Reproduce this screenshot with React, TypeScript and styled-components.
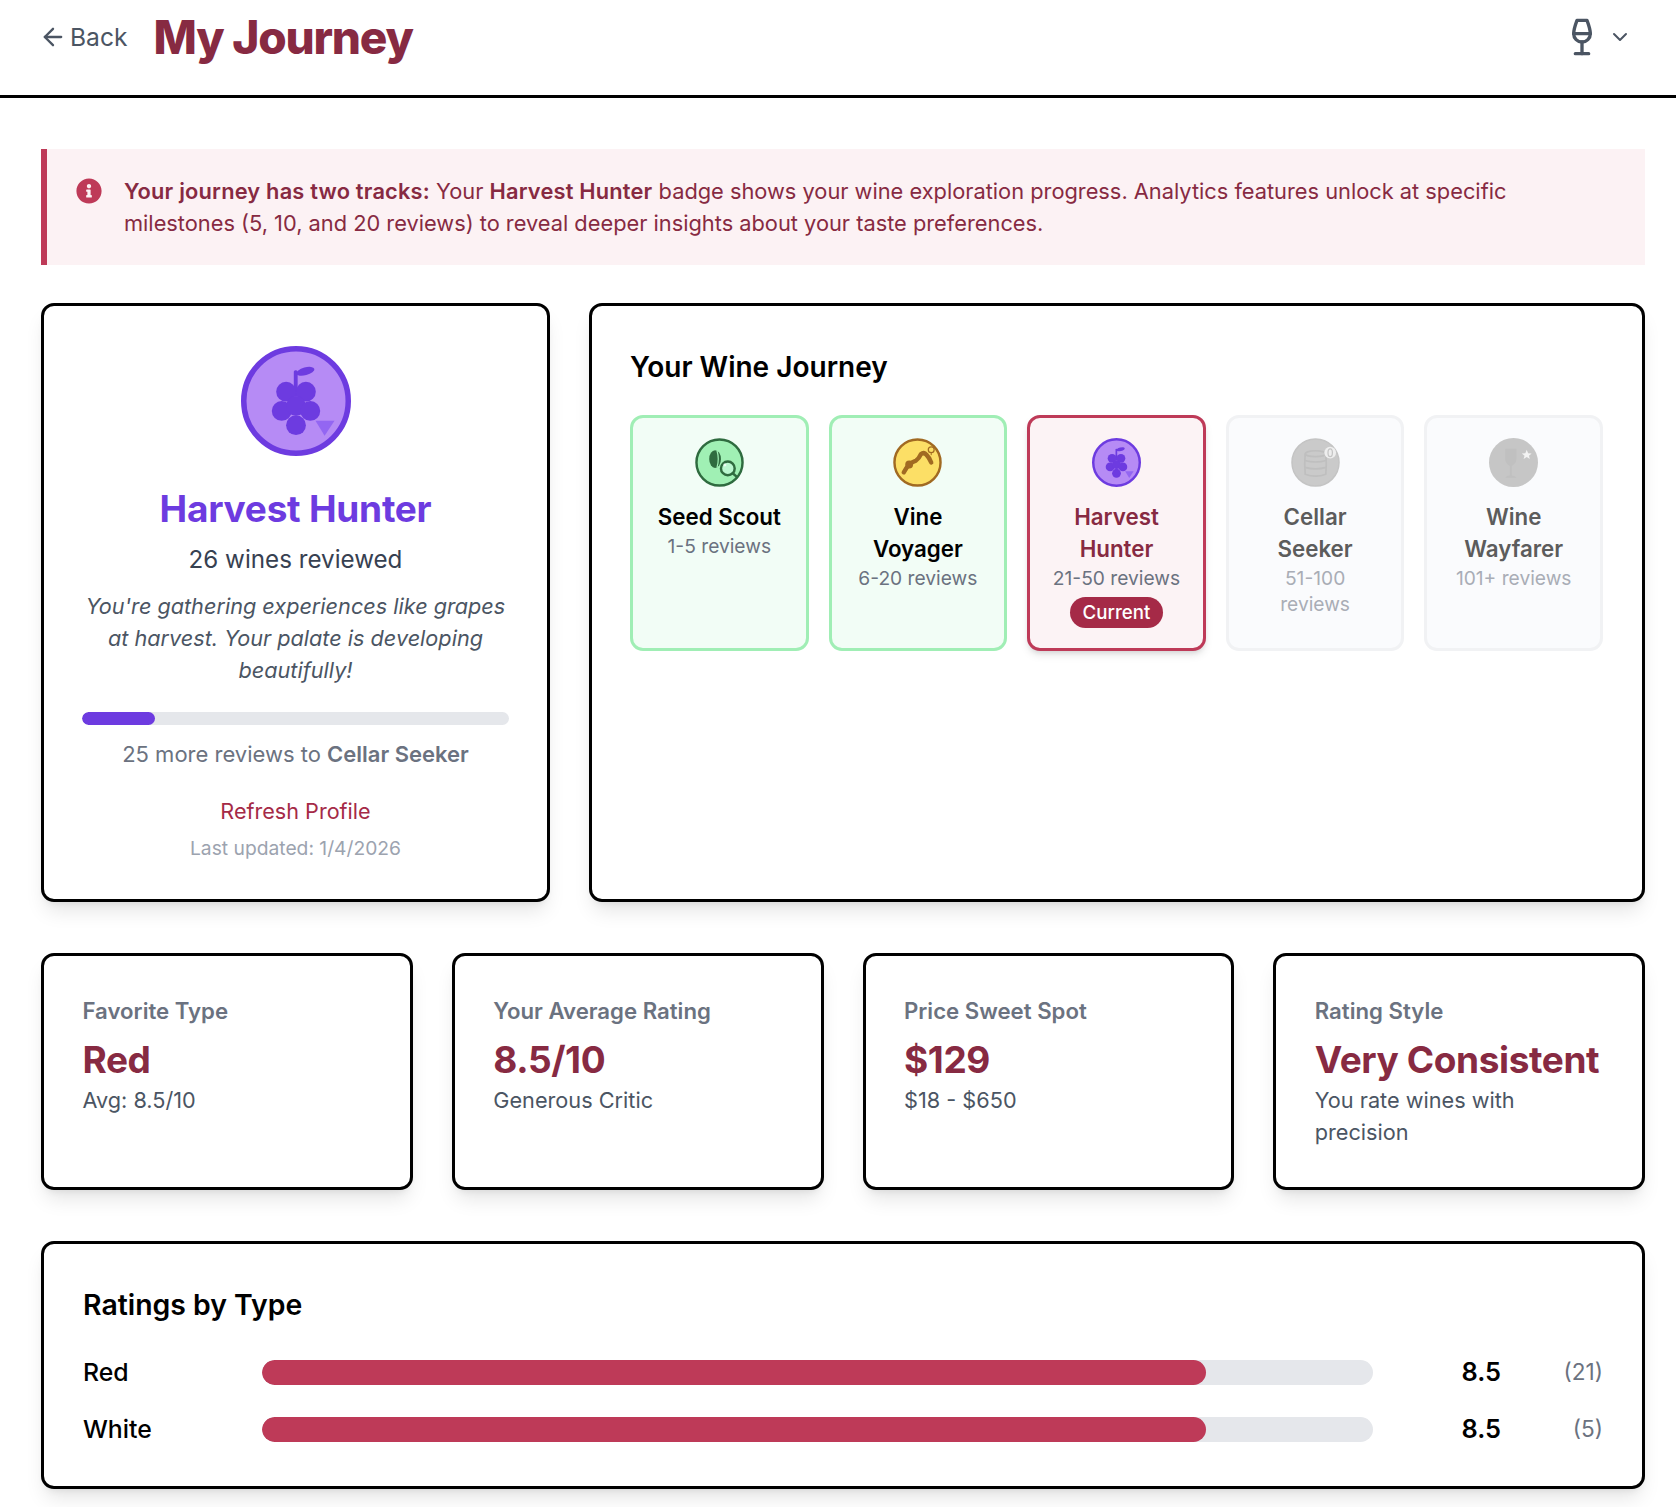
import React from 'react';
import styled, { createGlobalStyle } from 'styled-components';
import { ArrowLeft, ChevronDown, Wine } from 'lucide-react';
import { FaInfoCircle } from 'react-icons/fa';

type TierState = 'done' | 'current' | 'locked';

const GlobalStyle = createGlobalStyle`
  html, body {
    margin: 0;
    padding: 0;
    background: #fff;
    font-family: 'Inter', 'Liberation Sans', sans-serif;
    color: #000;
  }
  * {
    box-sizing: border-box;
  }
`;

const Header = styled.header`
  display: flex;
  align-items: center;
  height: 98px;
  padding: 0 44px 22px 39px;
  border-bottom: 3px solid #000;
`;

const BackLink = styled.a`
  display: flex;
  align-items: center;
  gap: 3px;
  font-size: 24.6px;
  line-height: 30px;
  padding-top: 1px;
  color: #4b5563;
  margin-right: 26px;
`;

const PageTitle = styled.h1`
  flex: 1;
  margin: 1px 0 0;
  font-size: 46px;
  line-height: 58px;
  font-weight: 800;
  letter-spacing: -1.2px;
  color: #872a42;
`;

const UserMenu = styled.div`
  display: flex;
  align-items: center;
  gap: 6px;
  color: #4b5563;
`;

const Main = styled.main`
  padding: 51px 31px 18px 41px;
`;

const Notice = styled.div`
  display: flex;
  gap: 22px;
  padding: 26px 48px 26px 29px;
  background: #fcf2f4;
  border-left: 6px solid #be3a58;
  font-size: 21.8px;
  line-height: 32px;
  color: #872a42;
  svg {
    flex: none;
    margin-top: 3px;
    color: #be3a58;
  }
  strong {
    font-weight: 600;
    letter-spacing: 0.2px;
  }
`;

const TopGrid = styled.div`
  display: grid;
  grid-template-columns: 509px 1fr;
  gap: 39px;
  margin-top: 38px;
`;

const Card = styled.section`
  background: #fff;
  border: 3px solid #000;
  border-radius: 13px;
  box-shadow: 0 13px 20px -4px rgba(0, 0, 0, 0.1), 0 5px 8px -5px rgba(0, 0, 0, 0.1);
`;

const ProfileCard = styled(Card)`
  display: flex;
  flex-direction: column;
  align-items: center;
  padding: 40px 38px 37px;
  text-align: center;
`;

const BigBadge = styled.div`
  width: 110px;
  height: 110px;
  svg {
    display: block;
    width: 100%;
    height: 100%;
  }
`;

const LevelName = styled.div`
  margin-top: 29px;
  font-size: 37px;
  line-height: 48px;
  font-weight: 700;
  letter-spacing: -0.25px;
  color: #6d3be0;
`;

const ReviewCount = styled.div`
  margin-top: 11px;
  font-size: 24.2px;
  line-height: 32px;
  color: #374151;
`;

const Tagline = styled.p`
  margin: 14px 0 0;
  font-size: 21.66px;
  line-height: 32px;
  font-style: italic;
  color: #4b5563;
`;

const ProgressTrack = styled.div`
  width: 100%;
  height: 13px;
  margin-top: 26px;
  border-radius: 7px;
  background: #e5e7eb;
  overflow: hidden;
`;

const ProgressFill = styled.div`
  height: 100%;
  border-radius: 7px;
  background: #6d3be0;
`;

const NextLevel = styled.div`
  margin-top: 13px;
  font-size: 22px;
  line-height: 32px;
  color: #6b7280;
  strong {
    font-weight: 600;
  }
`;

const RefreshLink = styled.a`
  margin-top: 25px;
  font-size: 21.6px;
  line-height: 32px;
  color: #a52a47;
`;

const LastUpdated = styled.div`
  margin-top: 8px;
  font-size: 19.25px;
  line-height: 27px;
  color: #9ca3af;
`;

const JourneyCard = styled(Card)`
  padding: 41px 39px 40px 38px;
`;

const SectionTitle = styled.h2`
  margin: 0;
  font-size: 28px;
  line-height: 40px;
  font-weight: 600;
  color: #000;
`;

const TierGrid = styled.div`
  display: grid;
  grid-template-columns: repeat(5, 1fr);
  gap: 20px;
  margin-top: 28px;
`;

const TierCard = styled.div<{ $state: TierState }>`
  display: flex;
  flex-direction: column;
  align-items: center;
  padding: 20px 20px;
  border-radius: 13px;
  text-align: center;
  border: 3px solid
    ${(p) => (p.$state === 'done' ? '#a0eeb5' : p.$state === 'current' ? '#be3a58' : '#f1f2f4')};
  background: ${(p) =>
    p.$state === 'done' ? '#f2fdf6' : p.$state === 'current' ? '#fcf3f5' : '#fafbfd'};
  box-shadow: ${(p) =>
    p.$state === 'current'
      ? '0 5px 8px -1px rgba(0, 0, 0, 0.1), 0 3px 5px -2px rgba(0, 0, 0, 0.1)'
      : 'none'};
`;

const TierIcon = styled.div`
  width: 49px;
  height: 49px;
  svg {
    display: block;
    width: 100%;
    height: 100%;
  }
`;

const TierName = styled.div<{ $state: TierState }>`
  margin-top: 14px;
  font-size: 22.3px;
  line-height: 32px;
  font-weight: 600;
  color: ${(p) => (p.$state === 'done' ? '#000' : p.$state === 'current' ? '#872a42' : '#5c5c5c')};
`;

const TierRange = styled.div<{ $state: TierState }>`
  font-size: 19.2px;
  line-height: 26px;
  color: ${(p) => (p.$state === 'locked' ? '#a9adb6' : '#6b7280')};
`;

const CurrentPill = styled.span`
  margin-top: 6px;
  padding: 2px 13px;
  border-radius: 16px;
  background: #a52a47;
  color: #fff;
  font-size: 18.67px;
  line-height: 27px;
  font-weight: 500;
`;

const StatGrid = styled.div`
  display: grid;
  grid-template-columns: repeat(4, 1fr);
  gap: 39px;
  margin-top: 51px;
`;

const StatCard = styled(Card)`
  padding: 41px 39px 39px 38.5px;
`;

const StatLabel = styled.div`
  font-size: 22.2px;
  line-height: 27px;
  font-weight: 600;
  color: #6b7280;
`;

const StatValue = styled.div`
  margin-top: 12px;
  font-size: 37px;
  line-height: 48px;
  font-weight: 700;
  letter-spacing: -0.4px;
  color: #872a42;
`;

const StatNote = styled.div`
  font-size: 21.7px;
  line-height: 32px;
  color: #4b5563;
`;

const RatingsCard = styled(Card)`
  margin-top: 51px;
  padding: 43px 39px 41px;
`;

const RatingsTitle = styled(SectionTitle)`
  font-size: 28.4px;
  line-height: 36px;
`;

const RatingRows = styled.div`
  display: flex;
  flex-direction: column;
  gap: 25px;
  margin-top: 33px;
`;

const RatingRow = styled.div`
  display: grid;
  grid-template-columns: 179px 1fr 128px 102px;
  align-items: center;
  font-size: 24.8px;
  line-height: 32px;
`;

const RatingLabel = styled.div`
  font-weight: 500;
`;

const RatingTrack = styled.div`
  height: 25px;
  border-radius: 13px;
  background: #e5e7eb;
  overflow: hidden;
`;

const RatingFill = styled.div`
  height: 100%;
  border-radius: 13px;
  background: #be3a58;
`;

const RatingValue = styled.div`
  text-align: right;
  font-size: 25.4px;
  font-weight: 600;
`;

const RatingCount = styled.div`
  text-align: right;
  font-size: 22.6px;
  color: #6b7280;
`;

function GrapeBadge() {
  return (
    <svg viewBox="0 0 100 100">
      <circle cx="50" cy="50" r="47.5" fill="#b68bf5" stroke="#6d3be0" strokeWidth="5" />
      <g fill="#6d3be0">
        <rect x="48" y="22" width="3.5" height="24" rx="1.5" />
        <ellipse cx="58.5" cy="23" rx="8.5" ry="3.5" transform="rotate(-15 58.5 23)" />
        <circle cx="41" cy="41.5" r="9" />
        <circle cx="59" cy="41.5" r="9" />
        <circle cx="37" cy="59" r="9" />
        <circle cx="50" cy="54.5" r="9" />
        <circle cx="63" cy="59" r="9" />
        <circle cx="50" cy="72" r="9" />
      </g>
      <polygon points="67.7,68 85,68 76,81.5" fill="#7c4ff0" opacity="0.6" />
    </svg>
  );
}

function SeedBadge() {
  return (
    <svg viewBox="0 0 100 100">
      <circle cx="50" cy="50" r="47" fill="#a0f0b4" stroke="#2f6b3f" strokeWidth="5" />
      <ellipse cx="41" cy="43" rx="12" ry="18" fill="#2f6b3f" />
      <path d="M45 26 Q50 43 45 60" fill="none" stroke="#a0f0b4" strokeWidth="2.5" />
      <circle cx="67" cy="62" r="14" fill="#bbf7d0" stroke="#2f6b3f" strokeWidth="5" />
      <circle cx="61" cy="55" r="3" fill="#ecfdf3" />
      <path d="M77 72 L86 80" stroke="#2f6b3f" strokeWidth="5" strokeLinecap="round" />
    </svg>
  );
}

function VineBadge() {
  return (
    <svg viewBox="0 0 100 100">
      <circle cx="50" cy="50" r="47" fill="#fcdf66" stroke="#a16a22" strokeWidth="5" />
      <path
        d="M22 70 Q28 60 33 54 Q40 48 47 46 Q53 42 57 33 Q63 28 68 34 Q74 40 78 50"
        fill="none"
        stroke="#a16a22"
        strokeWidth="9"
        strokeLinecap="round"
      />
      <circle cx="33" cy="54" r="8" fill="#a16a22" />
      <circle cx="78" cy="24" r="6" fill="#fcdf66" stroke="#a16a22" strokeWidth="2.5" />
      <path d="M78 30 V35" stroke="#a16a22" strokeWidth="2" />
    </svg>
  );
}

function BarrelBadge() {
  return (
    <svg viewBox="0 0 100 100">
      <circle cx="50" cy="50" r="48" fill="#cacaca" stroke="#c4c4c4" strokeWidth="3" />
      <g fill="none" stroke="#bfbfbf" strokeWidth="3.5">
        <ellipse cx="50" cy="32" rx="21" ry="6" />
        <path d="M29 32 Q27 52 29 74 Q50 82 71 74 Q73 52 71 32" />
        <path d="M28 46 Q50 52 72 46" />
        <path d="M28 60 Q50 66 72 60" />
      </g>
      <circle cx="80" cy="30" r="12" fill="#eeeeee" />
      <ellipse cx="80" cy="30" rx="4.5" ry="8" fill="none" stroke="#c4c4c4" strokeWidth="2.5" />
    </svg>
  );
}

function GobletBadge() {
  return (
    <svg viewBox="0 0 100 100">
      <circle cx="50" cy="50" r="50" fill="#c6c6c6" />
      <path
        d="M33 22 H56 V42 C56 52 49 56 46.5 57 V76 C49 77 54 78 56 81 H33 C35 78 40 77 42.5 76 V57 C40 56 33 52 33 42 Z"
        fill="#c0c0c0"
      />
      <polygon
        points="77,24 79.8,31 87,31.5 81.5,36 83.4,43 77,39 70.6,43 72.5,36 67,31.5 74.2,31"
        fill="#f3f3f3"
      />
    </svg>
  );
}

const tiers: { name: string; range: string; state: TierState; icon: React.ReactNode }[] = [
  { name: 'Seed Scout', range: '1-5 reviews', state: 'done', icon: <SeedBadge /> },
  { name: 'Vine Voyager', range: '6-20 reviews', state: 'done', icon: <VineBadge /> },
  { name: 'Harvest Hunter', range: '21-50 reviews', state: 'current', icon: <GrapeBadge /> },
  { name: 'Cellar Seeker', range: '51-100 reviews', state: 'locked', icon: <BarrelBadge /> },
  { name: 'Wine Wayfarer', range: '101+ reviews', state: 'locked', icon: <GobletBadge /> },
];

const stats = [
  { label: 'Favorite Type', value: 'Red', note: 'Avg: 8.5/10' },
  { label: 'Your Average Rating', value: '8.5/10', note: 'Generous Critic' },
  { label: 'Price Sweet Spot', value: '$129', note: '$18 - $650' },
  { label: 'Rating Style', value: 'Very Consistent', note: 'You rate wines with precision' },
];

const ratings = [
  { type: 'Red', score: 8.5, count: 21 },
  { type: 'White', score: 8.5, count: 5 },
];

export default function App() {
  return (
    <>
      <GlobalStyle />
      <Header>
        <BackLink>
          <ArrowLeft size={28} strokeWidth={2} />
          Back
        </BackLink>
        <PageTitle>My Journey</PageTitle>
        <UserMenu>
          <Wine size={40} strokeWidth={2} />
          <ChevronDown size={24} strokeWidth={2} />
        </UserMenu>
      </Header>
      <Main>
        <Notice>
          <FaInfoCircle size={26} />
          <div>
            <strong>Your journey has two tracks:</strong> Your <strong>Harvest Hunter</strong> badge
            shows your wine exploration progress. Analytics features unlock at specific milestones
            (5, 10, and 20 reviews) to reveal deeper insights about your taste preferences.
          </div>
        </Notice>
        <TopGrid>
          <ProfileCard>
            <BigBadge>
              <GrapeBadge />
            </BigBadge>
            <LevelName>Harvest Hunter</LevelName>
            <ReviewCount>26 wines reviewed</ReviewCount>
            <Tagline>
              You're gathering experiences like grapes at harvest. Your palate is developing
              beautifully!
            </Tagline>
            <ProgressTrack>
              <ProgressFill style={{ width: '17%' }} />
            </ProgressTrack>
            <NextLevel>
              25 more reviews to <strong>Cellar Seeker</strong>
            </NextLevel>
            <RefreshLink>Refresh Profile</RefreshLink>
            <LastUpdated>Last updated: 1/4/2026</LastUpdated>
          </ProfileCard>
          <JourneyCard>
            <SectionTitle>Your Wine Journey</SectionTitle>
            <TierGrid>
              {tiers.map((tier) => (
                <TierCard key={tier.name} $state={tier.state}>
                  <TierIcon>{tier.icon}</TierIcon>
                  <TierName $state={tier.state}>{tier.name}</TierName>
                  <TierRange $state={tier.state}>{tier.range}</TierRange>
                  {tier.state === 'current' && <CurrentPill>Current</CurrentPill>}
                </TierCard>
              ))}
            </TierGrid>
          </JourneyCard>
        </TopGrid>
        <StatGrid>
          {stats.map((stat) => (
            <StatCard key={stat.label}>
              <StatLabel>{stat.label}</StatLabel>
              <StatValue>{stat.value}</StatValue>
              <StatNote>{stat.note}</StatNote>
            </StatCard>
          ))}
        </StatGrid>
        <RatingsCard>
          <RatingsTitle>Ratings by Type</RatingsTitle>
          <RatingRows>
            {ratings.map((row) => (
              <RatingRow key={row.type}>
                <RatingLabel>{row.type}</RatingLabel>
                <RatingTrack>
                  <RatingFill style={{ width: `${row.score * 10}%` }} />
                </RatingTrack>
                <RatingValue>{row.score}</RatingValue>
                <RatingCount>({row.count})</RatingCount>
              </RatingRow>
            ))}
          </RatingRows>
        </RatingsCard>
      </Main>
    </>
  );
}
